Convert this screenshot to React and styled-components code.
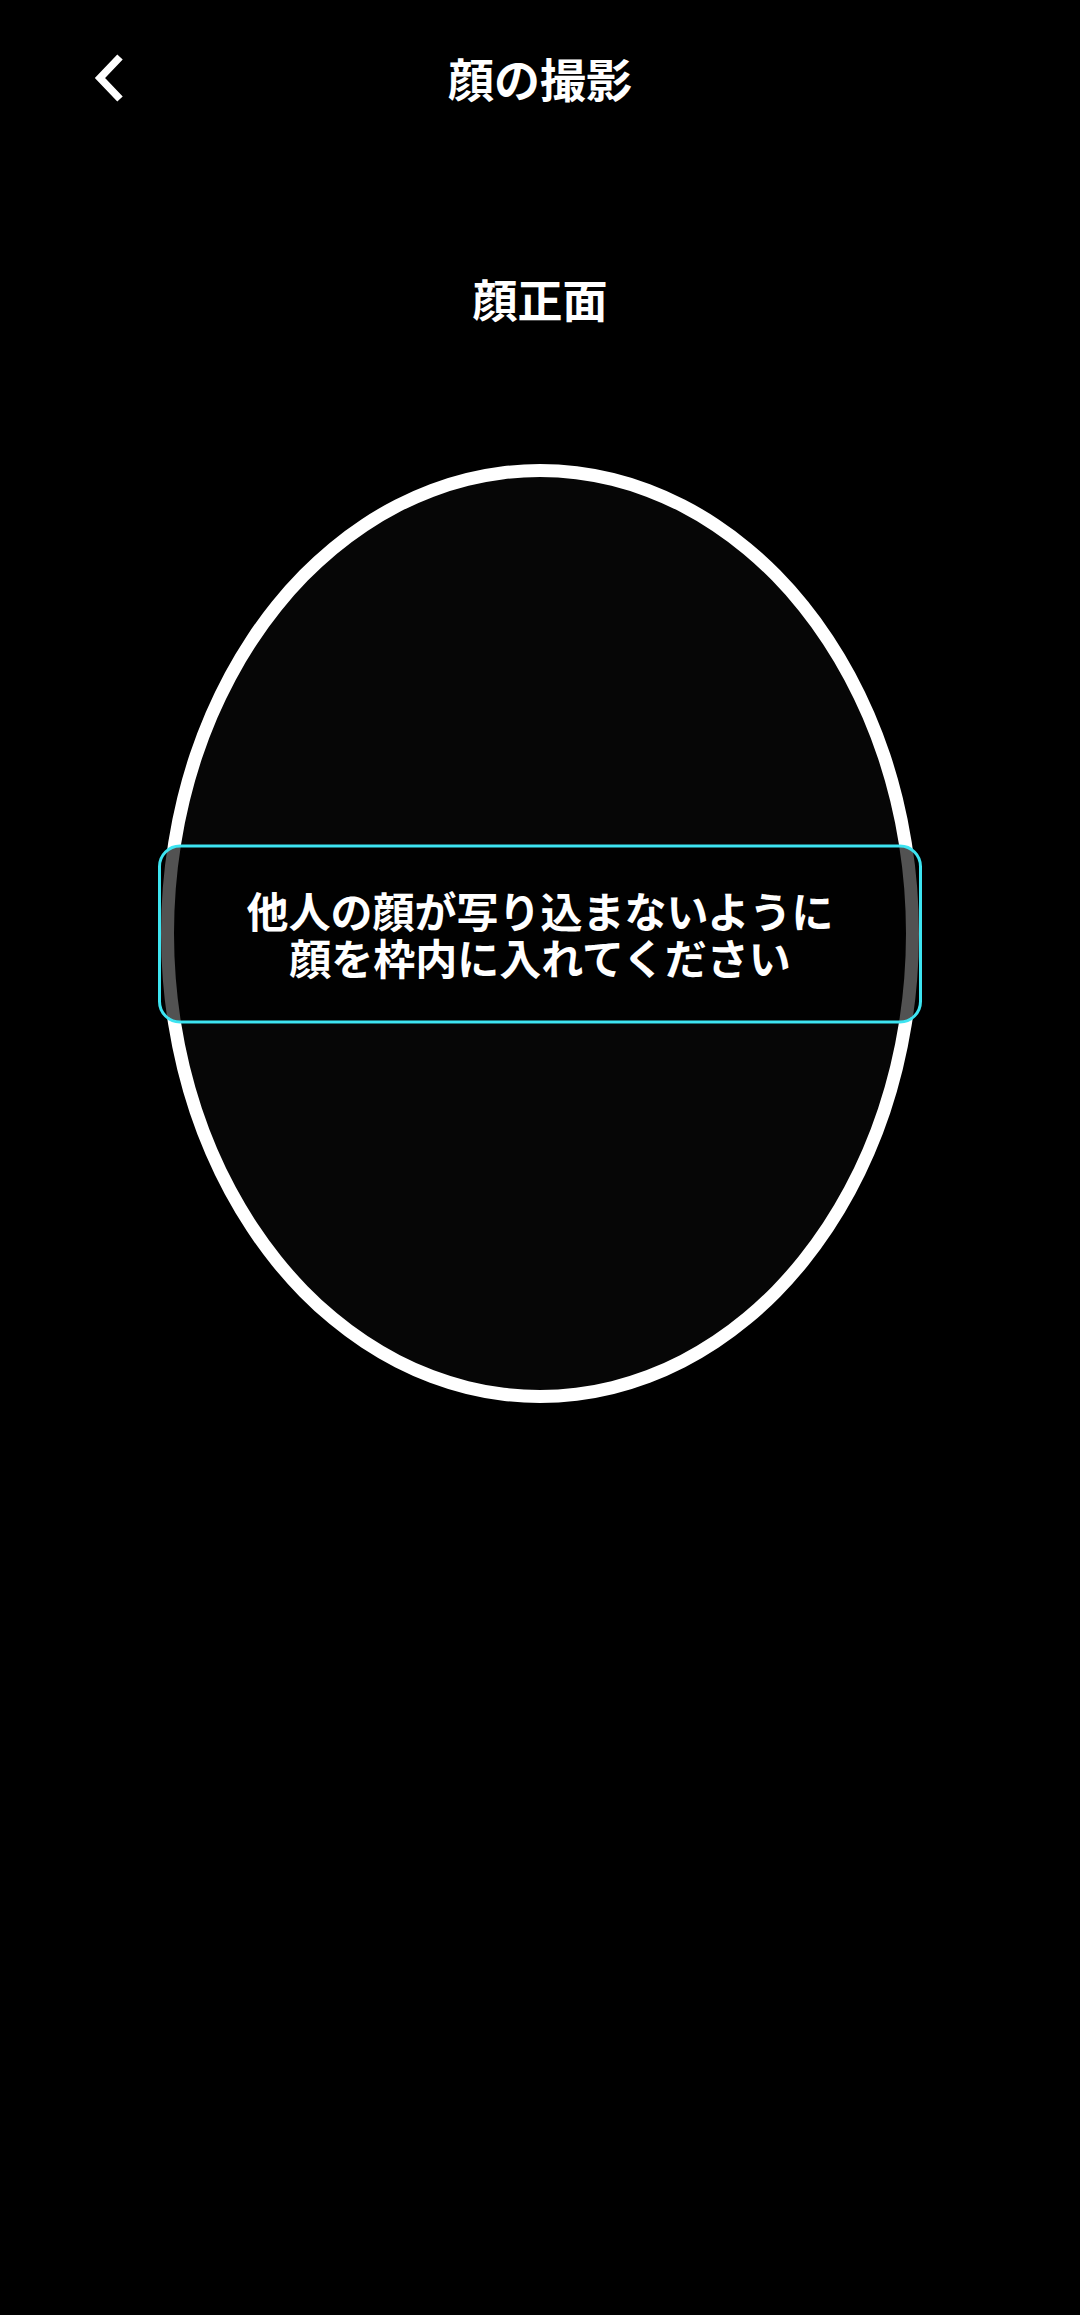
import React from 'react';
import styled, { createGlobalStyle } from 'styled-components';

const GlobalStyle = createGlobalStyle`
  html, body {
    margin: 0;
    padding: 0;
    background: #000;
  }
  body {
    font-family: "Noto Sans CJK JP", "Noto Sans", sans-serif;
    color: #fff;
  }
`;

const Page = styled.div`
  min-height: 100vh;
  background: #000;
  display: flex;
  flex-direction: column;
  align-items: center;
`;

const Header = styled.header`
  width: 100%;
  height: 156px;
  display: grid;
  grid-template-columns: 1fr auto 1fr;
  align-items: center;
`;

const BackButton = styled.button`
  justify-self: start;
  margin-left: 92px;
  padding: 0;
  border: none;
  background: none;
  display: flex;
  cursor: pointer;
`;

const Title = styled.h1`
  margin: 0;
  font-size: 46px;
  font-weight: 700;
  line-height: 1.2;
  color: #fff;
`;

const Subtitle = styled.h2`
  margin: 116px 0 0;
  font-size: 45px;
  font-weight: 700;
  line-height: 54px;
  color: #fff;
`;

const Frame = styled.div`
  position: relative;
  margin-top: 138px;
  width: 764px;
  height: 939px;
  display: flex;
  justify-content: center;
`;

const Oval = styled.div`
  box-sizing: border-box;
  width: 758px;
  height: 939px;
  border: 13px solid #fff;
  border-radius: 50%;
  background: #060606;
`;

const Notice = styled.div`
  position: absolute;
  left: 0;
  right: 0;
  top: 50%;
  transform: translateY(-50%);
  box-sizing: border-box;
  height: 179px;
  padding-bottom: 2px;
  border: 3px solid #3de4f1;
  border-radius: 22px;
  background: rgba(0, 0, 0, 0.68);
  display: flex;
  align-items: center;
  justify-content: center;
`;

const NoticeText = styled.p`
  margin: 0;
  text-align: center;
  font-size: 42px;
  font-weight: 700;
  line-height: 47px;
  color: #fff;
`;

const ChevronLeft = () => (
  <svg width="36" height="56" viewBox="0 0 36 56" fill="none">
    <polyline
      points="28,7 8,28 28,49"
      stroke="#fff"
      strokeWidth="7.5"
      strokeLinecap="butt"
      strokeLinejoin="miter"
    />
  </svg>
);

const App = () => (
  <>
    <GlobalStyle />
    <Page>
      <Header>
        <BackButton aria-label="戻る">
          <ChevronLeft />
        </BackButton>
        <Title>顔の撮影</Title>
        <span />
      </Header>
      <Subtitle>顔正面</Subtitle>
      <Frame>
        <Oval />
        <Notice>
          <NoticeText>
            他人の顔が写り込まないように
            <br />
            顔を枠内に入れてください
          </NoticeText>
        </Notice>
      </Frame>
    </Page>
  </>
);

export default App;
